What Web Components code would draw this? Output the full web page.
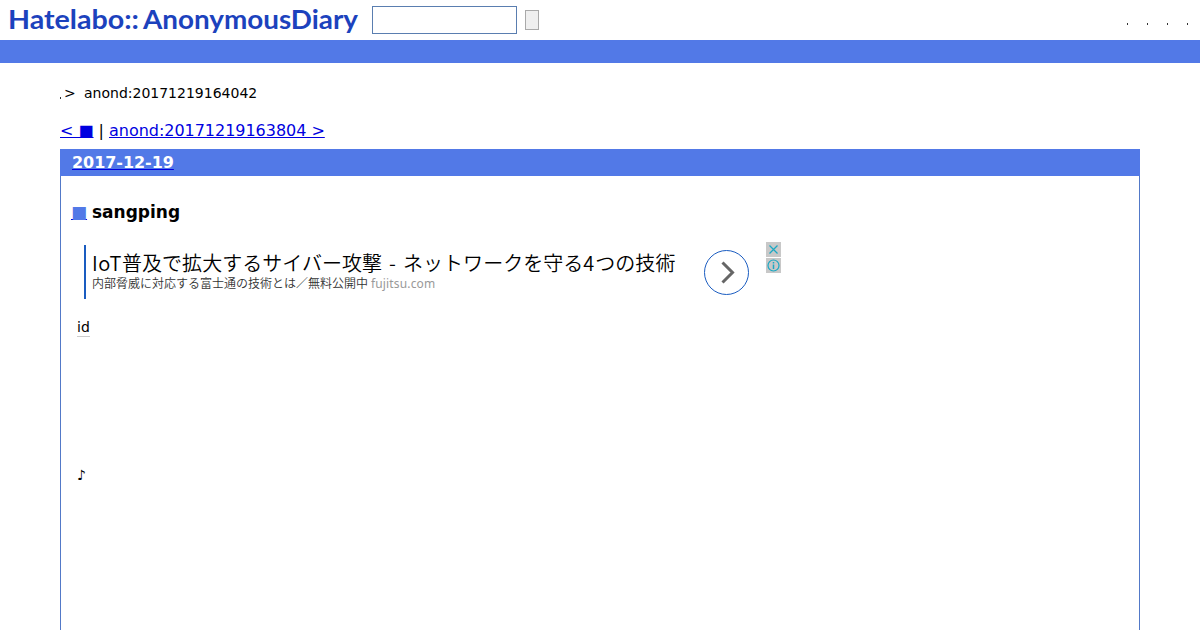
<!DOCTYPE html>
<html lang="ja">
<head>
<meta charset="utf-8">
<title>anond:20171219164042</title>
<style>
  body {
    margin: 0;
    height: 630px;
    overflow: hidden;
    background: #fff;
    color: #000;
    font-family: "DejaVu Sans", "Noto Sans CJK JP", sans-serif;
    font-size: 16px;
  }
</style>
</head>
<body>
<diary-page>
  <diary-header slot="header"></diary-header>
  <diary-crumbs current="anond:20171219164042"></diary-crumbs>
  <diary-pager next="anond:20171219163804"></diary-pager>
  <diary-day date="2017-12-19">
    <diary-entry heading="sangping">
      <text-ad>
        <span slot="title"><span style="letter-spacing:.55px">IoT</span>普及で拡大するサイバー攻撃<span style="display:inline-block;width:21px;text-align:center">-</span>ネットワークを守る<span style="display:inline-block;width:12px">4</span>つの技術</span>
        <span slot="text">内部脅威に対応する富士通の技術とは／無料公開中</span>
        <span slot="site">fujitsu.com</span>
      </text-ad>
      <p slot="keyword">id</p>
      <p slot="note">♪</p>
    </diary-entry>
  </diary-day>
</diary-page>

<script>
  // Attach an open root and fill it
  function shadow(el, html) {
    el.attachShadow({ mode: 'open' }).innerHTML = html;
  }

  class DiaryPage extends HTMLElement {
    constructor() {
      super();
      shadow(this, /* html */ `
        <style>
          :host { display: block; }
          main { display: flex; flex-direction: column; padding: 0 60px; }
        </style>
        <slot name="header"></slot>
        <main><slot></slot></main>
      `);
    }
  }

  class DiaryHeader extends HTMLElement {
    constructor() {
      super();
      shadow(this, /* html */ `
        <style>
          :host { display: block; border-bottom: 23px solid #5279e7; }
          header { display: flex; align-items: center; height: 40px; box-sizing: border-box; padding: 0 12px 0 0; }
          svg { display: block; width: 372px; height: 40px; }
          text { font: 700 26px Lato, sans-serif; fill: #1c42bd; }
          input { box-sizing: border-box; width: 145px; height: 28px; margin: 0; border: 1px solid #5a7eb0; background: #fff; }
          button { box-sizing: border-box; width: 14px; height: 20px; margin: 0 0 0 8px; padding: 0; border: 1px solid #a9a9a9; background: #efefef; }
          nav { display: flex; gap: 19px; margin-left: auto; padding-top: 8px; }
          nav i { width: 1px; height: 2px; background: #333; }
        </style>
        <header>
          <svg viewBox="0 0 372 40">
            <text x="8" y="29" textLength="131" lengthAdjust="spacingAndGlyphs">Hatelabo::</text>
            <text x="143" y="29" textLength="215" lengthAdjust="spacingAndGlyphs">AnonymousDiary</text>
          </svg>
          <input type="text"><button type="button"></button>
          <nav><i></i><i></i><i></i><i></i></nav>
        </header>
      `);
    }
  }

  class DiaryCrumbs extends HTMLElement {
    constructor() {
      super();
      shadow(this, /* html */ `
        <style>
          :host { display: flex; align-items: center; height: 16px; margin-top: 22px; font-size: 14px; line-height: 16px; white-space: pre; }
          i { width: 1px; height: 2px; margin: 9px 3px 0 0; background: #333; }
          b { font-weight: 400; width: 20px; }
        </style>
        <i></i><b>&gt;</b><span></span>
      `);
      this.shadowRoot.querySelector('span').textContent = this.getAttribute('current');
    }
  }

  class DiaryPager extends HTMLElement {
    constructor() {
      super();
      shadow(this, /* html */ `
        <style>
          :host { display: block; margin-top: 20px; height: 28px; line-height: 19px; letter-spacing: -.03px; }
          a { color: #0000e0; text-decoration: underline; }
        </style>
        <a>&lt; ■</a> | <a class="next"></a>
      `);
      this.shadowRoot.querySelector('.next').textContent = `${this.getAttribute('next')} >`;
    }
  }

  class DiaryDay extends HTMLElement {
    constructor() {
      super();
      shadow(this, /* html */ `
        <style>
          :host { display: block; box-sizing: border-box; height: 481px; border: 1px solid #5279c8; border-width: 0 1px; }
          h2 { margin: 0 -1px; height: 27px; padding-left: 12px; background: #5279e7; color: #fff; font-size: 16px; line-height: 27px; letter-spacing: -.05px; }
          a { color: #0000e0; text-decoration: underline; }
          a span { color: #fff; }
        </style>
        <h2><a><span></span></a></h2>
        <slot></slot>
      `);
      this.shadowRoot.querySelector('span').textContent = this.getAttribute('date');
    }
  }

  class DiaryEntry extends HTMLElement {
    constructor() {
      super();
      shadow(this, /* html */ `
        <style>
          :host { display: block; padding: 25px 10px 0; }
          h3 { margin: 0; height: 22px; font-size: 17px; line-height: 22px; }
          a { color: #0000e0; text-decoration: underline; }
          a b { color: #5279e7; }
          h3 > span { margin-left: -1px; }
          ::slotted(p) { margin: 0 0 0 6px; width: max-content; font-size: 14px; line-height: 17px; }
          ::slotted([slot="keyword"]) { margin-top: 20px; border-bottom: 1px solid #ccc; }
          ::slotted([slot="note"]) { margin-top: 130px; }
        </style>
        <h3><a><b>■</b></a> <span></span></h3>
        <slot></slot>
        <slot name="keyword"></slot>
        <slot name="note"></slot>
      `);
      this.shadowRoot.querySelector('span').textContent = this.getAttribute('heading');
    }
  }

  class TextAd extends HTMLElement {
    constructor() {
      super();
      shadow(this, /* html */ `
        <style>
          :host {
            display: flex; align-items: flex-start; margin: 19px 0 0 13px; height: 57px;
            font-family: "Noto Sans CJK JP", sans-serif; white-space: nowrap;
          }
          .copy { box-sizing: border-box; width: 620px; height: 54px; margin-top: 3px; padding: 7px 0 0 6px; border-left: 2px solid #1a5cc0; }
          .title { height: 23px; font-size: 20px; font-weight: 350; line-height: 22px; letter-spacing: .03px; }
          .text { color: #333; font-size: 12px; font-weight: 350; line-height: 16px; }
          .site { color: #999; font-family: "Noto Sans", sans-serif; font-weight: 400; letter-spacing: .15px; margin-left: 3px; }
          .go { width: 45px; height: 45px; margin-top: 8px; }
          .marks { display: grid; gap: 1px; margin-left: 17px; }
          svg { display: block; fill: none; }
        </style>
        <div class="copy">
          <div class="title"><slot name="title"></slot></div>
          <div class="text"><slot name="text"></slot><span class="site"><slot name="site"></slot></span></div>
        </div>
        <svg class="go" viewBox="0 0 45 45">
          <circle cx="22.5" cy="22.5" r="22" stroke="#1a5cc0"/>
          <path d="M18.5 12.5 28.5 22.5 18.5 32.5" stroke="#666" stroke-width="3"/>
        </svg>
        <div class="marks">
          <svg width="15" height="15"><path fill="#c8c8c8" d="M0 0h15v15H0z"/><path d="M3.5 3.5l8 8m0-8l-8 8" stroke="#1aa9c4" stroke-width="1.2"/></svg>
          <svg width="15" height="15"><path fill="#c8c8c8" d="M0 0h15v15H0z"/><circle cx="7.5" cy="7.5" r="5.5" stroke="#1aa9c4" stroke-width="1.2"/><path d="M7.5 4v1.5m0 1V11" stroke="#1aa9c4" stroke-width="1.5"/></svg>
        </div>
      `);
    }
  }

  customElements.define('diary-page', DiaryPage);
  customElements.define('diary-header', DiaryHeader);
  customElements.define('diary-crumbs', DiaryCrumbs);
  customElements.define('diary-pager', DiaryPager);
  customElements.define('diary-day', DiaryDay);
  customElements.define('diary-entry', DiaryEntry);
  customElements.define('text-ad', TextAd);
</script>
</body>
</html>
